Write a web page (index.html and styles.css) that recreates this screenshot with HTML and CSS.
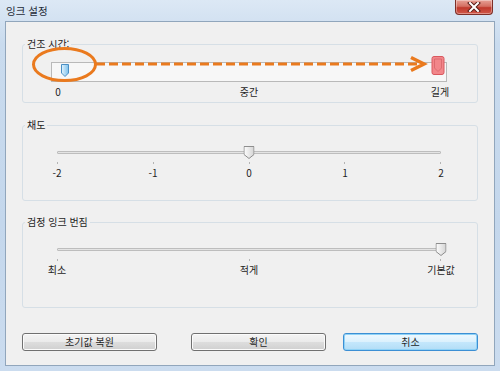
FILE: index.html
```html
<!DOCTYPE html>
<html lang="ko">
<head>
  <meta charset="UTF-8" />
  <title>잉크 설정</title>
  <link rel="stylesheet" href="styles.css">
</head>
<body>

  <div class="window">
    <div class="titlebar">
      <span class="title">잉크 설정</span>
      <button class="close-btn" aria-label="닫기">
        <svg width="14" height="10" viewBox="0 0 14 10">
          <path d="M3 1 L11 9 M11 1 L3 9" stroke="#5a1f1a" stroke-width="4" stroke-linecap="square"/>
          <path d="M3 1 L11 9 M11 1 L3 9" stroke="#ffffff" stroke-width="2" stroke-linecap="square"/>
        </svg>
      </button>
    </div>

    <div class="client">
      <fieldset class="group group-dry">
        <legend>건조 시간:</legend>
        <div class="annot-wrap">
          <div class="focus-box">
            <div class="slider">
              <svg class="thumb thumb-blue" style="left: 2%" width="8" height="13" viewBox="0 0 8 13">
                <defs>
                  <linearGradient id="blueFill" x1="0" y1="0" x2="1" y2="0">
                    <stop offset="0" stop-color="#e4f4fd"/>
                    <stop offset="1" stop-color="#7cc0ec"/>
                  </linearGradient>
                </defs>
                <path d="M0.5 0.5 H7.5 V9 L4 12.5 L0.5 9 Z" fill="url(#blueFill)" stroke="#4a8fc4"/>
              </svg>
            </div>
          </div>
          <div class="labels">
            <span>0</span><span>중간</span><span>길게</span>
          </div>
          <!-- orange annotation drawn over the slider -->
          <svg class="annot" width="456" height="42" viewBox="23 43 456 42">
            <ellipse cx="64.5" cy="64.5" rx="31" ry="16" fill="none" stroke="#ea7a1e" stroke-width="3"/>
            <line x1="96" y1="64" x2="421" y2="64" stroke="#ea7a1e" stroke-width="3" stroke-dasharray="9 4"/>
            <polyline points="411,57.5 424,64 411,70.5" fill="none" stroke="#ea7a1e" stroke-width="3.5"/>
            <rect x="432" y="56.5" width="12" height="18" rx="2" fill="#f2868a" stroke="#d9585e"/>
            <path d="M434.5 59 H441.5 V68 L438 71.5 L434.5 68 Z" fill="none" stroke="#d7646a" stroke-width="0.8"/>
          </svg>
        </div>
      </fieldset>

      <fieldset class="group group-sat">
        <legend>채도</legend>
        <div class="slider">
          <div class="track"></div>
          <svg class="thumb" style="left: 50%" width="11" height="13" viewBox="0 0 11 13">
            <use href="#greyThumb"/>
          </svg>
        </div>
        <div class="ticks">
          <i></i><i></i><i></i><i></i><i></i>
        </div>
        <div class="labels">
          <span>-2</span><span>-1</span><span>0</span><span>1</span><span>2</span>
        </div>
      </fieldset>

      <fieldset class="group group-bleed">
        <legend>검정 잉크 번짐</legend>
        <div class="slider">
          <div class="track"></div>
          <svg class="thumb" style="left: 100%" width="11" height="13" viewBox="0 0 11 13">
            <use href="#greyThumb"/>
          </svg>
        </div>
        <div class="ticks">
          <i></i><i></i><i></i>
        </div>
        <div class="labels">
          <span>최소</span><span>적게</span><span>기본값</span>
        </div>
      </fieldset>

      <div class="buttons">
        <button class="btn btn-reset">초기값 복원</button>
        <button class="btn">확인</button>
        <button class="btn btn-default">취소</button>
      </div>
    </div>
  </div>

  <svg width="0" height="0" class="defs">
    <defs>
      <linearGradient id="greyFill" x1="0" y1="0" x2="1" y2="0">
        <stop offset="0" stop-color="#fdfdfd"/>
        <stop offset="1" stop-color="#d4d4d4"/>
      </linearGradient>
      <path id="greyThumb" d="M0.5 0.5 H10.5 V8.5 L5.5 12.5 L0.5 8.5 Z" fill="url(#greyFill)" stroke="#8e8e8e"/>
    </defs>
  </svg>

</body>
</html>
```

FILE: styles.css
```css
body {
  margin: 0;
  width: 500px;
  height: 371px;
  overflow: hidden;
  font-family: "Noto Sans CJK KR", "Noto Sans", sans-serif;
  color: #1e1e1e;
  background: #c8dbef;
}

.window {
  width: 500px;
  height: 371px;
  display: flex;
  flex-direction: column;
  background: linear-gradient(180deg, #dce8f5 0%, #c9dbee 12%, #c4d7ec 60%, #cbdcef 100%);
}

.titlebar {
  height: 21px;
  display: flex;
  justify-content: space-between;
  align-items: flex-start;
  padding: 0 7px 0 6px;
  flex: none;
}

.title {
  font-size: 10.5px;
  line-height: 14px;
  margin-top: 4px;
  color: #1f2b38;
}

.close-btn {
  width: 38px;
  height: 15px;
  padding: 0;
  border: 1px solid #7d2f28;
  border-top: none;
  border-radius: 0 0 4px 4px;
  background: linear-gradient(180deg, #e7a196 0%, #d46f62 45%, #c0392c 55%, #d0584a 100%);
  display: flex;
  align-items: center;
  justify-content: center;
  box-shadow: inset 0 0 0 1px rgba(255, 255, 255, 0.35);
}

.client {
  flex: 1;
  margin: 0 5px 5px 5px;
  border: 1px solid #91a6bc;
  background: #f0f0f0;
  padding-top: 15px;
  display: flex;
  flex-direction: column;
}

.group {
  margin: 0 16px;
  padding: 0;
  min-width: 0;
  border: 1px solid #d6dfe6;
  border-radius: 3px;
}

.group legend {
  font-size: 10px;
  line-height: 14px;
  padding: 0 2px;
  margin-left: 2px;
}

.group-dry {
  padding: 11px 0 3px;
}

.group-sat {
  margin-top: 15px;
  padding: 14px 0 20px;
}

.group-bleed {
  margin-top: 14px;
  padding: 14px 0 30px;
}

.annot-wrap {
  position: relative;
}

.annot {
  position: absolute;
  left: 0;
  top: -19px;
  pointer-events: none;
}

.focus-box {
  height: 17px;
  margin: 0 30px 0 28px;
  border: 1px solid #b9b9b9;
  background: #f7f7f7;
  padding: 1px 5px 0;
}

.focus-box .slider {
  margin: 0;
}

.slider {
  position: relative;
  height: 13px;
  margin: 0 36px 0 34px;
}

.track {
  position: absolute;
  left: 0;
  right: 0;
  top: 5px;
  height: 1px;
  background: #e4e4e4;
  border: 1px solid #bdbdbd;
  border-radius: 1px;
}

.thumb {
  position: absolute;
  top: 0;
  transform: translateX(-50%);
}

.ticks {
  display: flex;
  justify-content: space-between;
  margin: 3px 36px 0 34px;
  height: 2px;
}

.ticks i {
  width: 1px;
  height: 2px;
  background: #b4b4b4;
}

.labels {
  display: flex;
  justify-content: space-between;
  margin: 2px 36px 0 34px;
  font-size: 10px;
  line-height: 14px;
}

.group-dry .labels {
  margin: 3px 37px 0 35px;
}

.labels span {
  width: 0;
  display: flex;
  justify-content: center;
  white-space: nowrap;
}

.buttons {
  display: flex;
  gap: 17px;
  margin: 25px 16px 0;
}

.btn {
  width: 135px;
  height: 18px;
  padding: 0;
  font-family: inherit;
  font-size: 10px;
  line-height: 14px;
  color: #1e1e1e;
  border: 1px solid #707070;
  border-radius: 3px;
  background: linear-gradient(180deg, #f4f4f4 0%, #ebebeb 48%, #dddddd 52%, #d0d0d0 100%);
  box-shadow: inset 0 0 0 1px #fbfbfb;
}

.btn-reset {
  margin-right: auto;
}

.btn-default {
  border-color: #3c8fd4;
  background: linear-gradient(180deg, #eef8fe 0%, #dcf1fd 48%, #c4e7fc 52%, #b2ddf6 100%);
  box-shadow: inset 0 0 0 1px #8fd2f6;
}

.defs {
  position: absolute;
}
```
